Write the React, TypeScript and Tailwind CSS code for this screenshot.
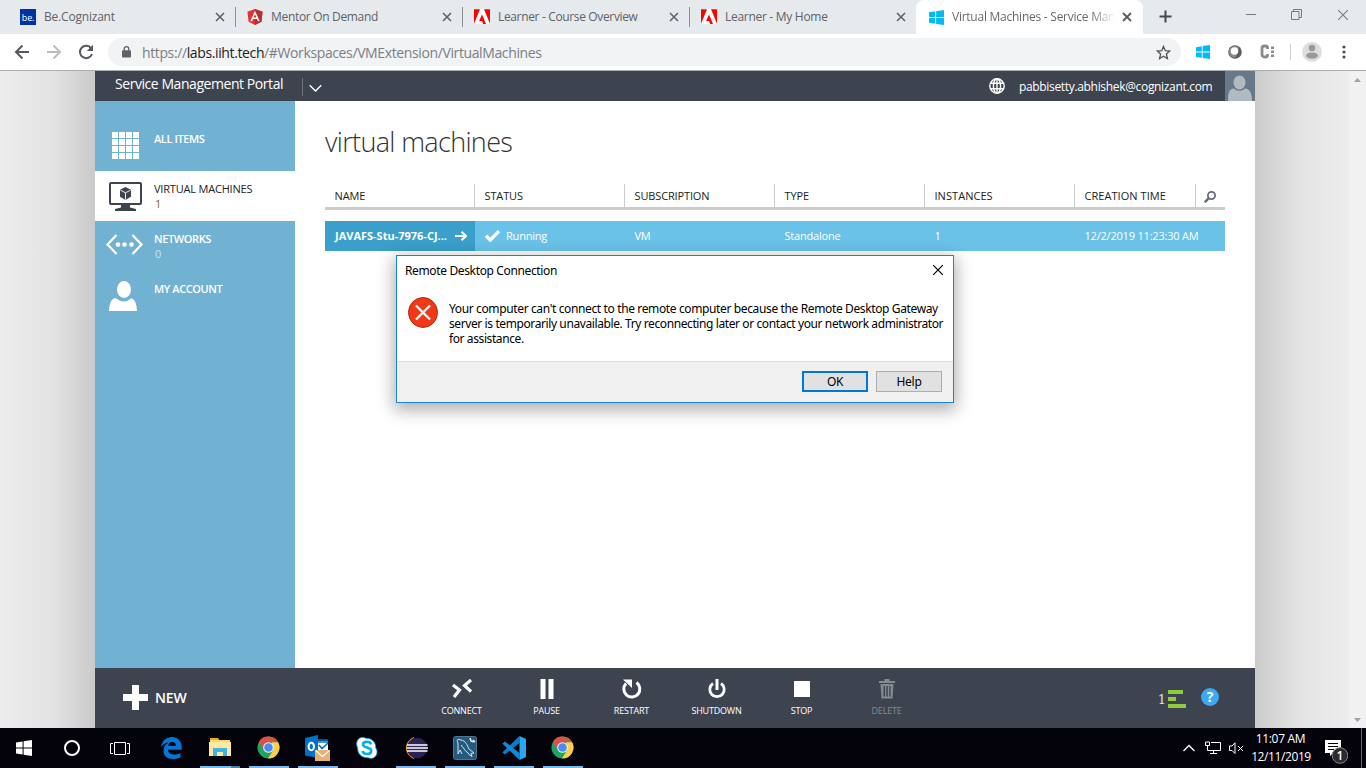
import React from "react";

type Svg = React.SVGProps<SVGSVGElement>;

const WindowsLogo = ({ className }: { className: string }) => (
  <svg className={className} viewBox="0 0 16 16" fill="currentColor">
    <path d="M0 2.500 6.600 1.400V7.500H0zM7.600 1.200 16 0V7.500H7.600zM0 8.500H6.600V14.600L0 13.600zM7.600 8.500H16V16L7.600 14.800z" />
  </svg>
);

const AdobeLogo = () => (
  <svg className="h-4 w-4" viewBox="0 0 16 16">
    <path fill="#fff" d="M0 0h16v15H0z" />
    <path fill="#f00" d="M0 .3h6L0 14.800zM10 .3h6v14.500zM8 5.600l4 9.300H9.200l-1.200-3H5.100z" />
  </svg>
);

const AngularLogo = () => (
  <svg className="h-4 w-4" viewBox="0 0 16 16">
    <path fill="#e23237" d="M8 0l7.600 2.700-1.200 10L8 16l-6.400-3.300L.4 2.700z" />
    <path fill="#b52e31" d="M8 0l7.600 2.700-1.200 10L8 16z" />
    <path fill="#fff" fillRule="evenodd" d="M8 1.800 3.300 12.300h1.800l.9-2.300h4l.9 2.300h1.800zM8 5.200 9.400 8.500H6.600z" />
  </svg>
);

const BeLogo = () => (
  <span className="flex h-4 w-4 items-center justify-center bg-[#0033a0] font-['Open_Sans',sans-serif] text-[9px] leading-none tracking-[-0.2px] text-white">
    be.
  </span>
);

const Cross = (p: Svg) => (
  <svg viewBox="0 0 10 10" fill="none" stroke="currentColor" {...p}>
    <path d="M1 1l8 8M9 1l-8 8" />
  </svg>
);

const Chrome = () => (
  <svg className="mr-px h-[23px] w-[23px]" viewBox="0 0 24 24">
    <circle cx="12" cy="12" r="11.500" fill="#1da462" />
    <path fill="#dd5144" d="M2 6.300A11.500 11.500 0 0 1 22 6.500H12L7 14.500z" />
    <path fill="#ffcd46" d="M22 6.500A11.500 11.500 0 0 1 11.500 23.500L17 14.500 15.500 6.500z" />
    <circle cx="12" cy="12" r="5.600" fill="#f1f1f1" />
    <circle cx="12" cy="12" r="4.500" fill="#4c8bf5" />
  </svg>
);

const tabs = [
  { title: "Be.Cognizant", icon: <BeLogo />, track: "tracking-[-0.2px]" },
  { title: "Mentor On Demand", icon: <AngularLogo />, track: "tracking-[-0.32px]" },
  { title: "Learner - Course Overview", icon: <AdobeLogo />, track: "tracking-[-0.35px]" },
  { title: "Learner - My Home", icon: <AdobeLogo />, track: "tracking-[-0.29px]" },
];

function TabStrip() {
  return (
    <div className="flex h-[34px] bg-[#e6eaed] pl-2 text-[12px] text-[#5f6368]">
      {tabs.map((t, i) => (
        <div key={t.title} className="-mr-px flex h-[34px] w-[228px] shrink-0 items-center pl-3">
          {t.icon}
          <span className={`ml-2 flex-1 whitespace-nowrap ${t.track}`}>{t.title}</span>
          <Cross className="mr-[10px] h-[10px] w-[10px] stroke-[1.600]" />
          <span className={i < 3 ? "h-5 w-px bg-[#8d9195]" : "h-5 w-px"} />
        </div>
      ))}
      <div className="flex h-[34px] w-[227px] shrink-0 items-center rounded-t-lg bg-white pl-[13px]">
        <WindowsLogo className="h-[15px] w-[15px] text-[#00bcf2]" />
        <span className="ml-[8px] w-[163px] overflow-hidden bg-gradient-to-r from-[#5f6368] from-85% to-white bg-clip-text tracking-[-0.25px] whitespace-nowrap text-transparent">
          Virtual Machines - Service Man
        </span>
        <Cross className="ml-[7px] h-[10px] w-[10px] stroke-[1.800] text-[#55595e]" />
      </div>
      <svg className="mt-[10px] ml-[16px] h-[13px] w-[13px]" viewBox="0 0 13 13" stroke="#44484c" strokeWidth="2">
        <path d="M6.500 .5v12M.5 6.500h12" />
      </svg>
      <div className="ml-auto flex items-start gap-[35px] pt-[9px] pr-[17px] text-[#777b80]">
        <svg className="h-[11px] w-[10px]" viewBox="0 0 10 11" stroke="currentColor">
          <path d="M0 5.500h10" />
        </svg>
        <svg className="h-[11px] w-[11px]" viewBox="0 0 11 11" fill="none" stroke="currentColor">
          <path d="M.5 2.500h7.500v8H.5zM2.500 2.500V.5h8v8H8" />
        </svg>
        <Cross className="h-[12px] w-[12px] stroke-[0.900]" />
      </div>
    </div>
  );
}

function Toolbar() {
  return (
    <div className="flex h-9 items-center bg-white text-[#5f6368]">
      <svg className="ml-[14px] h-4 w-4" viewBox="0 0 16 16" fill="none" stroke="#55595e" strokeWidth="2">
        <path d="M15 8H2M8.500 1.500 2 8l6.500 6.500" />
      </svg>
      <svg className="ml-4 h-4 w-4" viewBox="0 0 16 16" fill="none" stroke="#b9bbbd" strokeWidth="1.800">
        <path d="M1 8h13M7.500 1.500 14 8l-6.500 6.500" />
      </svg>
      <svg className="ml-4 h-4 w-4" viewBox="0 0 16 16" fill="none" stroke="#55595e" strokeWidth="2">
        <path d="M13.200 4.300A6.200 6.200 0 1 0 14 10" />
        <path d="M15 .8V7H8.800z" fill="#55595e" stroke="none" />
      </svg>
      <div className="ml-[14px] flex h-7 w-[1073px] items-center rounded-full bg-[#f1f3f4] pl-[14px]">
        <svg className="-mt-px h-3 w-[9px]" viewBox="0 0 9 12">
          <path d="M2.200 5V3a2.300 2.300 0 0 1 4.600 0v2" fill="none" stroke="#5f6368" strokeWidth="1.300" />
          <rect y="4.200" width="9" height="7.300" rx="1" fill="#5f6368" />
        </svg>
        <span className="ml-[11px] flex-1 text-[14px] tracking-[-0.38px] whitespace-nowrap text-[#7b8085]">
          https://<span className="text-[#202124]">labs.iiht.tech</span>/#Workspaces/VMExtension/VirtualMachines
        </span>
        <svg className="mr-[10px] h-[15px] w-[15px]" viewBox="0 0 15 15" fill="none" stroke="#55595e" strokeWidth="1.400">
          <path d="M7.500 1.500 9.300 5.700l4.400.4-3.300 3 1 4.400-3.900-2.300-3.900 2.300 1-4.400-3.300-3 4.400-.4z" />
        </svg>
      </div>
      <WindowsLogo className="ml-[15px] h-[14px] w-[14px] text-[#00bcf2]" />
      <svg className="ml-[18px] h-[14px] w-[14px]" viewBox="0 0 14 14">
        <circle cx="7" cy="7" r="6.800" fill="#5c5c5c" />
        <path d="M1 7a6 6 0 0 1 6-6 6 6 0 0 1 4 1.500L8 12 5 12.500A6 6 0 0 1 1 7" fill="#8b8b8b" />
        <circle cx="6.500" cy="6" r="3.800" fill="#fff" />
      </svg>
      <svg className="ml-[18px] h-4 w-[15px]" viewBox="0 0 15 16" fill="none" stroke="#8a8a8a">
        <path d="M7.500 5V4A2 2 0 0 0 5.500 2h-1A2.500 2.500 0 0 0 2 4.500v6A2.500 2.500 0 0 0 4.500 13h1a2 2 0 0 0 2-2v-1" strokeWidth="2.800" />
        <path d="M12.500 2.500v11" strokeWidth="3" strokeDasharray="2.500 1.500" />
      </svg>
      <span className="ml-[15px] h-4 w-px bg-[#cfcfcf]" />
      <svg className="ml-[11px] h-5 w-5" viewBox="0 0 20 20">
        <circle cx="10" cy="10" r="10" fill="#dedede" />
        <circle cx="10" cy="6" r="3.300" fill="#999" />
        <path d="M4 14c0-2.500 3-3.500 6-3.500s6 1 6 3.500c-1 2-3 2.700-6 2.700S5 16 4 14" fill="#999" />
      </svg>
      <svg className="ml-5 h-[14px] w-1" viewBox="0 0 4 14" fill="#4a4e52">
        <circle cx="2" cy="2" r="1.600" />
        <circle cx="2" cy="7" r="1.600" />
        <circle cx="2" cy="12" r="1.600" />
      </svg>
    </div>
  );
}

function PortalHeader() {
  return (
    <div className="flex h-[30px] items-start bg-[#3e444f] text-white">
      <span className="mt-[3px] ml-5 w-[187px] text-[14px] leading-5 tracking-[-0.44px] whitespace-nowrap">
        Service Management Portal
      </span>
      <span className="mt-[7px] h-[18px] w-px bg-[#6d727b]" />
      <svg className="mt-[13px] ml-[6px] h-[9px] w-[13px]" viewBox="0 0 13 9" fill="none" stroke="#fff" strokeWidth="1.400">
        <path d="M.7 1.300 6.500 7l5.800-5.700" />
      </svg>
      <svg className="mt-[7px] ml-auto h-4 w-4" viewBox="0 0 16 16" fill="none" stroke="#fff" strokeWidth="1.400">
        <circle cx="8" cy="8" r="7.200" />
        <ellipse cx="8" cy="8" rx="3.600" ry="7.200" />
        <path d="M8 1v14M1.500 5.200h13M1.500 10.800h13" />
      </svg>
      <span className="mt-[6px] ml-[14px] w-[206px] text-[12px] leading-5 tracking-[-0.33px] whitespace-nowrap">
        pabbisetty.abhishek@cognizant.com
      </span>
      <svg className="h-[30px] w-[30px] bg-[#67788a]" viewBox="0 0 30 30" fill="#b1b9c1">
        <ellipse cx="14.500" cy="11.500" rx="6" ry="7" />
        <path d="M3 30c0-8 1-12 6-12.500 3 3 8 3 11 0 5 .5 7 4.500 7 12.500z" />
      </svg>
    </div>
  );
}

const GridIcon = () => (
  <svg className="h-[27px] w-[27px]" viewBox="0 0 27 27" fill="#fff">
    {[0, 7, 14, 21].map((y) => [0, 7, 14, 21].map((x) => <rect key={`${x}-${y}`} x={x} y={y} width="6" height="6" />))}
  </svg>
);

const MonitorIcon = () => (
  <svg className="h-[29px] w-[33px]" viewBox="0 0 33 29">
    <rect x="1" y="1" width="31" height="21" rx="1" fill="none" stroke="#3e444f" strokeWidth="2" />
    <path d="M12 22.500h9v3l6 1.500v2H6v-2l6-1.500z" fill="#3e444f" />
    <path d="M16.500 5 22 7.700v7.100l-5.500 3.200L11 14.800V7.700z" fill="#3e444f" />
    <path d="M11.500 8.200l5 2.600 5-2.600M16.500 10.800v6.800" stroke="#fff" strokeWidth=".9" fill="none" />
  </svg>
);

const NetworkIcon = () => (
  <svg className="h-[21px] w-[37px]" viewBox="0 0 37 21" fill="none" stroke="#fff" strokeWidth="2.200">
    <path d="M10.500 1 1.500 10.500l9 9.500M26.500 1l9 9.500-9 9.500" />
    <g fill="#fff" stroke="none">
      <circle cx="12" cy="10.500" r="2.300" />
      <circle cx="18.500" cy="10.500" r="2.300" />
      <circle cx="25.500" cy="10.500" r="2.300" />
    </g>
  </svg>
);

const PersonIcon = () => (
  <svg className="h-[30px] w-7" viewBox="0 0 28 30" fill="#fff">
    <ellipse cx="15" cy="8.500" rx="7" ry="8.500" />
    <path d="M0 30c.5-7 1.500-11.500 6-13 2 0 3 3 9 3.500 5-.5 6-3.500 8-3 3.500 1.500 4.500 6 5 12.500z" />
  </svg>
);

function Sidebar() {
  const label = "text-[11px] leading-[14px] whitespace-nowrap";
  return (
    <div className="w-[200px] shrink-0 bg-[#71b1d1] text-white">
      <div className="flex h-[70px]">
        <div className="w-[59px] pt-[31px] pl-[17px]"><GridIcon /></div>
        <div className={`${label} pt-[31px] font-semibold tracking-[-0.4px]`}>ALL ITEMS</div>
      </div>
      <div className="flex h-[50px] bg-white text-[#222]">
        <div className="w-[59px] pt-[11px] pl-[14px]"><MonitorIcon /></div>
        <div className={`${label} pt-[11px] tracking-[-0.2px]`}>
          VIRTUAL MACHINES
          <div className="mt-px pl-px text-[11px] text-[#8a6237]">1</div>
        </div>
      </div>
      <div className="flex h-[50px]">
        <div className="w-[59px] pt-[13px] pl-[11px]"><NetworkIcon /></div>
        <div className={`${label} pt-[11px] font-semibold tracking-[-0.4px]`}>
          NETWORKS
          <div className="mt-px pl-px text-[11px] font-normal text-[#cfe5f0]">0</div>
        </div>
      </div>
      <div className="flex h-[50px]">
        <div className="w-[59px] pt-[10px] pl-[14px]"><PersonIcon /></div>
        <div className={`${label} pt-[11px] font-semibold tracking-[-0.4px]`}>MY ACCOUNT</div>
      </div>
    </div>
  );
}

function MachineList() {
  const head = "w-[150px] border-r border-[#ccc] pl-[9.500px]";
  const cell = "w-[150px] pl-[9.500px]";
  return (
    <div className="flex-1 bg-white pt-[23px] pl-[30px]">
      <h1 className="h-9 text-[27px] leading-9 font-light tracking-[-0.66px] text-[#333]">virtual machines</h1>
      <div className="mt-[24px] flex h-[26px] w-[900px] border-b-[3px] border-[#ccc] text-[11px] leading-[24px] tracking-[-0.14px] text-[#222]">
        <div className={head}>NAME</div>
        <div className={head}>STATUS</div>
        <div className={head}>SUBSCRIPTION</div>
        <div className={head}>TYPE</div>
        <div className={`${head} tracking-[0.05px]`}>INSTANCES</div>
        <div className="w-[121px] border-r border-[#ccc] pl-[9.500px] tracking-[0.05px]">CREATION TIME</div>
        <svg className="mt-[7px] ml-2 h-3 w-3" viewBox="0 0 12 12" fill="none" stroke="#666b75">
          <circle cx="7.500" cy="4.500" r="3.600" strokeWidth="1.800" />
          <path d="M4.800 7.200 .8 11.200" strokeWidth="2.400" />
        </svg>
      </div>
      <div className="mt-[11px] flex h-[30px] w-[900px] bg-[#6ac2e9] text-[11px] leading-[30px] tracking-[-0.2px] whitespace-nowrap text-white">
        <div className="flex w-[150px] items-center bg-[#3a9fcb] pl-[10px] font-bold">
          <span className="w-[120px] tracking-[0px]">JAVAFS-Stu-7976-CJ...</span>
          <svg className="h-[10px] w-3" viewBox="0 0 12 10" fill="none" stroke="#fff" strokeWidth="2">
            <path d="M0 5h10.500M6.500 .8 11 5 6.500 9.200" />
          </svg>
        </div>
        <div className="flex w-[150px] items-center pl-[10px]">
          <svg className="-mt-px h-3 w-[15px]" viewBox="0 0 15 12" fill="none" stroke="#fff" strokeWidth="3.400">
            <path d="M1 5.800 5.300 10 14 1.200" />
          </svg>
          <span className="ml-[6px]">Running</span>
        </div>
        <div className={cell}>VM</div>
        <div className={cell}>Standalone</div>
        <div className={cell}>1</div>
        <div className={cell}>12/2/2019 11:23:30 AM</div>
      </div>
    </div>
  );
}

const commands = [
  {
    name: "CONNECT",
    icon: <path d="M1 6l6.500 5L2 18M19 1l-6.500 5.500 6.500 6" fill="none" stroke="#fff" strokeWidth="3.200" />,
  },
  { name: "PAUSE", icon: <path d="M3.500 0h5v20h-5zM11.500 0h5v20h-5z" fill="#fff" /> },
  {
    name: "RESTART",
    icon: (
      <>
        <path d="M14.500 3.500A8 8 0 1 1 4 4.500" fill="none" stroke="#fff" strokeWidth="3" />
        <path d="M1 .5h9v8.500z" fill="#fff" />
      </>
    ),
  },
  {
    name: "SHUTDOWN",
    icon: (
      <>
        <path d="M14 4.500A7.200 7.200 0 1 1 6 4.500" fill="none" stroke="#fff" strokeWidth="2.800" />
        <path d="M10 0v11" stroke="#fff" strokeWidth="3" />
      </>
    ),
  },
  { name: "STOP", icon: <path d="M2 2h16v16H2z" fill="#fff" /> },
  {
    name: "DELETE",
    icon: (
      <path
        fillRule="evenodd"
        d="M7.500 0h5v2H18v2H2V2h5.500zM3.500 5h13l-1 14.500h-11zM6.500 7v10.500H8V7zM9.300 7v10.500h1.500V7zM12.300 7v10.500h1.300V7z"
        fill="#858990"
      />
    ),
  },
];

function CommandBar() {
  return (
    <div className="flex h-[60px] shrink-0 items-start bg-[#3e444f] text-white">
      <svg className="mt-[17px] ml-7 h-[25px] w-[25px]" viewBox="0 0 25 25" stroke="#fff" strokeWidth="7">
        <path d="M12.500 0v25M0 12.500h25" />
      </svg>
      <span className="mt-[20px] ml-[7px] w-[264px] text-[14px] leading-5 font-semibold tracking-[-0.2px]">NEW</span>
      {commands.map((c) => (
        <div key={c.name} className="flex w-[85px] flex-col items-center pt-[11px]">
          <svg className="h-5 w-5" viewBox="0 0 20 20">{c.icon}</svg>
          <span
            className={`mt-[5px] text-[9px] leading-[14px] tracking-[-0.2px] ${c.name === "DELETE" ? "text-[#858990]" : ""}`}
          >
            {c.name}
          </span>
        </div>
      ))}
      <span className="mt-[22px] ml-auto font-['DejaVu_Serif',serif] text-[13px] leading-5 text-[#ddd]">1</span>
      <svg className="mt-[22px] ml-[2px] h-[18px] w-[18px]" viewBox="0 0 18 18" fill="#8dcb3f">
        <path d="M0 0h15v4H0zM0 7h8v4H0zM0 14h18v4H0z" />
      </svg>
      <span className="mt-[20px] mr-9 ml-[15px] flex h-[18px] w-[18px] items-center justify-center rounded-full bg-[#3ba9f5] text-[14px] leading-none font-bold">
        ?
      </span>
    </div>
  );
}

function ErrorDialog() {
  return (
    <div className="absolute top-[255px] left-[396px] h-[148px] w-[558px] border border-[#1883d7] bg-white font-['Noto_Sans','Open_Sans',sans-serif] text-[12px] text-black shadow-[0_5px_16px_2px_rgba(0,0,0,0.32)]">
      <div className="flex h-[30px] items-center justify-between pr-[9px] pl-2">
        <span className="tracking-[-0.36px]">Remote Desktop Connection</span>
        <Cross className="-mt-[2px] h-3 w-3 stroke-[1]" />
      </div>
      <div className="flex h-[75px] pl-[11px]">
        <svg className="mt-[11px] h-[31px] w-[30px]" viewBox="0 0 30 31">
          <ellipse cx="15" cy="15.500" rx="14.500" ry="15" fill="#f03a17" stroke="#a92b12" />
          <path d="M8 8.500l14 14M22 8.500l-14 14" stroke="#fff" strokeWidth="2.300" />
        </svg>
        <div className="mt-[15px] ml-[11px] leading-[15px] tracking-[-0.4px] whitespace-nowrap">
          <p className="tracking-[-0.37px]">
            Your computer can't connect to the remote computer because the Remote Desktop Gateway
          </p>
          <p>server is temporarily unavailable. Try reconnecting later or contact your network administrator</p>
          <p>for assistance.</p>
        </div>
      </div>
      <div className="flex h-[41px] justify-end gap-2 border-t border-[#dfdfdf] bg-[#f0f0f0] pt-[9px] pr-[11px]">
        <button className="h-[21px] w-[66px] border-2 border-[#0078d7] bg-[#e1e1e1] leading-[17px] tracking-[-0.3px]">OK</button>
        <button className="h-[21px] w-[66px] border border-[#adadad] bg-[#e1e1e1] leading-[19px] tracking-[-0.3px]">Help</button>
      </div>
    </div>
  );
}

const Edge = () => (
  <svg className="h-[22px] w-[21px]" viewBox="0 0 21 22">
    <path
      fill="#0078d7"
      d="M0 10C1 3.500 5.500 0 11 0c6 0 9.700 4.500 9.700 10v2.800H7c.2 3.500 3 4.800 6.200 4.800 2.500 0 4.500-.7 6.300-1.700v4.300C17.500 21.400 15 22 12 22 6 22 2.500 18.500 2.500 13.500c0-3.500 2-6.500 5.300-8C4.500 5.500 2 7 0 10zM7 9h8c0-2.500-1.200-4-3.700-4C8.800 5 7.500 6.500 7 9z"
    />
  </svg>
);

const Explorer = () => (
  <svg className="h-[19px] w-[22px]" viewBox="0 0 22 19">
    <path d="M1 0h8l1 2h11v16H1z" fill="#f8d775" />
    <path d="M1 0h8l.8 2H1z" fill="#e8b015" />
    <path d="M0 4h22v14H0z" fill="#ffe9a0" />
    <path d="M4 10h14v8h-4v-4H8v4H4z" fill="#3eb2e8" />
  </svg>
);

const Outlook = () => (
  <svg className="h-[26px] w-[26px]" viewBox="0 0 26 26">
    <path d="M12 6h11v11H12z" fill="#fff" />
    <path d="M12 5h10v2H12zM14 10l3 3.500 6-5.500" stroke="#0072c6" strokeWidth="1.600" fill="none" />
    <path d="M0 3 13 0v23L0 20.500z" fill="#0072c6" />
    <ellipse cx="6.300" cy="11.500" rx="2.700" ry="3.700" stroke="#fff" strokeWidth="2" fill="none" />
    <path d="M10 15h15v11H10z" fill="#e8b26f" />
    <path d="M10.500 15.500l7 6 7-6" stroke="#fff" strokeWidth="1.200" fill="none" />
  </svg>
);

const Skype = () => (
  <svg className="h-[22px] w-[22px]" viewBox="0 0 22 22">
    <path d="M6 .5c2 0 3 .7 4 .7 6 0 10 4.500 9.600 9.600 1.400 2 2 4.500.7 7.200-1.800 3.400-5.300 4-8 2.700C6 21 1.500 17 1.700 10.800-1 6 2 .5 6 .5z" fill="#fff" stroke="#00aff0" strokeWidth=".8" />
    <path
      d="M15 7.300c-.5-1.800-2-2.500-4-2.500-2.500 0-4 1-4 2.800 0 4 8.200 2 8.200 6.200 0 2-1.700 3.200-4.200 3.200-2.400 0-4-1-4.400-3"
      stroke="#00aff0"
      strokeWidth="2.600"
      fill="none"
    />
  </svg>
);

const Eclipse = () => (
  <svg className="mr-px h-[22px] w-6" viewBox="0 0 24 22">
    <path d="M10 .5A11 11 0 0 0 10 21.500 12 12 0 0 1 10 .5" fill="#f7941e" stroke="#f7941e" strokeWidth=".8" />
    <circle cx="13" cy="11" r="10.300" fill="#2c2255" />
    <path d="M3 8h20.500M2.500 11h21.500M3 14h20.500" stroke="#fff" strokeWidth="1.700" />
  </svg>
);

const Workbench = () => (
  <svg className="h-6 w-6" viewBox="0 0 24 24">
    <rect x=".5" y=".5" width="23" height="23" rx="2" fill="#245a80" stroke="#51748b" />
    <path d="M5 18V7C3 3 5 3 8 4c5 1 6 5 8 9l5 4-3 .5 1 3-3-2c-1-3-3-2-4.500-5C10 11 9 11 8.500 9M5 18l2-4 2 4" fill="none" stroke="#d7e5ed" />
    <path d="M17 2l1 3 3 1M20 4l2 2" stroke="#e7eff4" strokeWidth="1.500" fill="none" />
  </svg>
);

const Code = () => (
  <svg className="h-6 w-6" viewBox="0 0 24 24">
    <path d="M17.500 0v7L3 18.500.3 16.500z" fill="#0b79c8" />
    <path d="M17.500 24v-7L3 5.500.3 7.500z" fill="#1287d2" />
    <path d="M17.500 0 24 3v18l-6.500 3z" fill="#2aa7f3" />
  </svg>
);

const apps = [
  { id: "edge", icon: <Edge />, open: false },
  { id: "explorer", icon: <Explorer />, open: true },
  { id: "chrome", icon: <Chrome />, open: true },
  { id: "outlook", icon: <Outlook />, open: true },
  { id: "skype", icon: <Skype />, open: false },
  { id: "eclipse", icon: <Eclipse />, open: true },
  { id: "workbench", icon: <Workbench />, open: true },
  { id: "code", icon: <Code />, open: true },
  { id: "chrome-2", icon: <Chrome />, open: true },
];

function Taskbar() {
  return (
    <div className="flex h-10 bg-[#04030c] text-white">
      <div className="flex w-12 items-center justify-center"><WindowsLogo className="h-4 w-4" /></div>
      <div className="flex w-12 items-center justify-center">
        <span className="h-4 w-4 rounded-full border-2 border-white" />
      </div>
      <div className="flex w-12 items-center justify-center">
        <svg className="h-[15px] w-5" viewBox="0 0 20 15" fill="none" stroke="#fff">
          <path d="M4.500 1.500h11v12h-11zM3 2.500H.5v10H3M17 2.500h2.500v10H17" />
        </svg>
      </div>
      <div className="ml-[7px] flex gap-[9px]">
        {apps.map((a) => (
          <div key={a.id} className="flex h-10 w-10 flex-col">
            <div className="flex flex-1 items-center justify-center pt-px">{a.icon}</div>
            <div className={a.open ? "flex h-[2px] justify-end bg-[#76b9ed]" : "h-[2px]"}>
              {a.id === "explorer" && <span className="w-[9px] bg-[#53809f]" />}
            </div>
          </div>
        ))}
      </div>
      <div className="ml-auto flex items-center">
        <svg className="h-2 w-3" viewBox="0 0 12 8" fill="none" stroke="#fff" strokeWidth="1.300">
          <path d="M.5 7 6 1.500 11.500 7" />
        </svg>
        <svg className="ml-[10px] h-[14px] w-4" viewBox="0 0 16 14" fill="none" stroke="#fff">
          <path d="M6 1.500h9.500v8H2.500V7M8.500 9.500v3M5 12.500h7M.5 1h4v3.500h-4zM2.500 4.500V7" />
        </svg>
        <svg className="ml-2 h-3 w-[15px]" viewBox="0 0 15 12" fill="none" stroke="#fff">
          <path d="M.5 4v4.500H3L6 11.500V.8L3 4zM9 4l5 5M14 4l-5 5" />
        </svg>
        <div className="ml-[7px] w-[60px] text-center text-[12px] leading-[18px] tracking-[-0.4px] whitespace-nowrap">
          <div className="-ml-px tracking-[-0.3px]">11:07 AM</div>
          <div>12/11/2019</div>
        </div>
        <svg className="mt-[7px] ml-[13px] h-6 w-6" viewBox="0 0 24 24">
          <path d="M1 0h16v13H9l-3 3v-3H1z" fill="#fff" />
          <path d="M4 3.500h10M4 6.500h10M4 9.500h6" stroke="#04030c" />
          <circle cx="16" cy="15.500" r="7.800" fill="#2b2b2f" stroke="#85858a" />
          <text x="16" y="20" textAnchor="middle" fontSize="12" fontWeight="600" fill="#fff" className="font-['Open_Sans',sans-serif]">1</text>
        </svg>
        <span className="ml-[13px] h-10 w-px bg-[#66666c]" />
        <span className="w-1" />
      </div>
    </div>
  );
}

export default function App() {
  return (
    <div className="relative flex h-[768px] w-[1366px] flex-col overflow-hidden font-['Open_Sans','Noto_Sans',sans-serif]">
      <TabStrip />
      <Toolbar />
      <div className="h-px bg-[#adadad]" />
      <div className="flex flex-1">
        <div className="w-[95px] bg-gradient-to-r from-[#ededed] via-[#e3e3e3] via-55% to-[#cacaca]" />
        <div className="flex w-[1160px] flex-col">
          <PortalHeader />
          <div className="flex flex-1">
            <Sidebar />
            <MachineList />
          </div>
          <CommandBar />
        </div>
        <div className="w-[94px] bg-gradient-to-r from-[#cbcbcb] via-[#e3e3e3] via-45% to-[#ededed]" />
        <div className="flex w-[17px] flex-col items-center justify-between bg-[#f1f1f1] pt-[7px] pb-[6px]">
          <svg className="h-1 w-[7px]" viewBox="0 0 7 4" fill="#a3a3a3"><path d="M0 4 3.500 0 7 4z" /></svg>
          <svg className="h-1 w-[7px]" viewBox="0 0 7 4" fill="#a3a3a3"><path d="M0 0 3.500 4 7 0z" /></svg>
        </div>
      </div>
      <Taskbar />
      <ErrorDialog />
    </div>
  );
}
